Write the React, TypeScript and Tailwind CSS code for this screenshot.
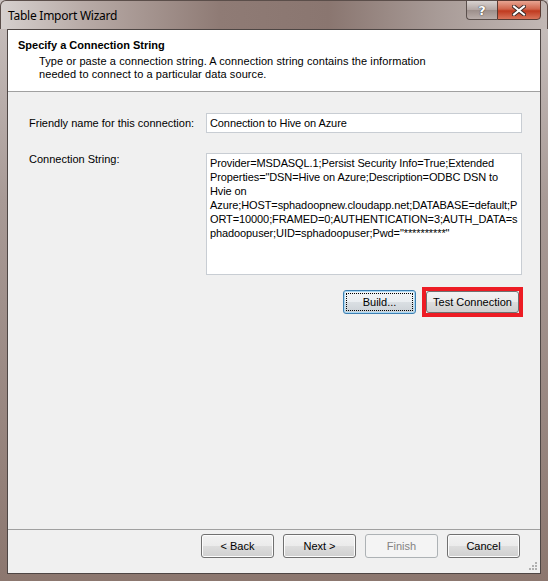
import React from "react";

const btn =
  "h-[24px] w-[73px] rounded-[3px] border border-[#707070] bg-[linear-gradient(to_bottom,#f2f2f2_0%,#ebebeb_50%,#dddddd_51%,#cfcfcf_100%)] text-[11px] text-black flex items-center justify-center shadow-[inset_0_0_0_1px_#fcfcfc]";

export default function App() {
  return (
    <div
      className="w-[548px] h-[581px] flex flex-col bg-[linear-gradient(to_bottom,#c9c1bf_0px,#a89a96_200px,#8c776f_581px)] relative overflow-hidden"
      style={{ fontFamily: '"Liberation Sans", Arial, sans-serif' }}
    >
      {/* title bar */}
      <div className="h-[29px] flex items-start relative bg-[linear-gradient(to_right,#d6d0ce_0%,#b8aba7_15%,#8f7b75_40%,#8a7670_60%,#a89b97_80%,#c2b8b5_100%)] rounded-t-[6px] border border-[#5b4e4a] border-b-0">
        <div
          className="pl-[7px] pt-[6px] text-[12px] text-black tracking-[-0.25px]"
          style={{ fontFamily: '"Noto Sans", "Open Sans", sans-serif' }}
        >
          Table Import Wizard
        </div>
        <div className="ml-auto mr-[6px] flex h-[20px] mt-[-1px]">
          <div className="w-[31px] h-[20px] rounded-bl-[4px] border border-[#5a4f4c] border-r-0 bg-[linear-gradient(to_bottom,#d8d2d0_0%,#b2a6a3_50%,#9c8e8a_51%,#b9adaa_100%)] flex items-center justify-center">
            <span className="text-[13px] font-bold text-white leading-none [text-shadow:0_0_1px_#333,0_0_1px_#333]" style={{ fontFamily: '"DejaVu Sans", sans-serif' }}>?</span>
          </div>
          <div className="w-[44px] h-[20px] rounded-br-[4px] border border-[#5a3a32] bg-[linear-gradient(to_bottom,#e8a592_0%,#d0654b_45%,#c03a1f_55%,#d9745a_100%)] flex items-center justify-center">
            <svg width="14" height="11" viewBox="0 0 14 11">
              <path d="M2 1.5 L12 9.5 M12 1.5 L2 9.5" stroke="#3a2a28" strokeWidth="4" strokeLinecap="square" />
              <path d="M2 1.5 L12 9.5 M12 1.5 L2 9.5" stroke="#ffffff" strokeWidth="2" strokeLinecap="square" />
            </svg>
          </div>
        </div>
      </div>

      {/* client area */}
      <div className="flex-1 mx-[7px] mb-[7px] border border-[#4e4644] bg-[#f0f0f0] flex flex-col relative">
        {/* header */}
        <div className="h-[62px] bg-white border-b border-[#a0a0a0] pl-[10px] pt-[9px]">
          <div className="text-[11px] font-bold text-black leading-[13px]">
            Specify a Connection String
          </div>
          <div className="pl-[21px] pt-[3px] text-[11px] text-black leading-[13px] tracking-[0.08px]">
            <div>Type or paste a connection string. A connection string contains the information</div>
            <div>needed to connect to a particular data source.</div>
          </div>
        </div>

        {/* body */}
        <div className="flex-1 pl-[21px] pr-[18px] pt-[21px] text-[11px] text-black">
          <div className="flex items-center h-[20px]">
            <div className="w-[177px]">Friendly name for this connection:</div>
            <div className="flex-1 h-[20px] bg-white border border-[#c8cdd3] flex items-center pl-[3px] tracking-[-0.1px]">
              Connection to Hive on Azure
            </div>
          </div>
          <div className="flex mt-[20px]">
            <div className="w-[177px] leading-[13px] pt-[0px]">Connection String:</div>
            <div className="flex-1 h-[122px] bg-white border border-[#c8cdd3] pl-[3px] pt-[2px] leading-[14px] whitespace-pre tracking-[-0.1px]">
              <div>Provider=MSDASQL.1;Persist Security Info=True;Extended</div>
              <div>Properties="DSN=Hive on Azure;Description=ODBC DSN to</div>
              <div>Hvie on</div>
              <div>Azure;HOST=sphadoopnew.cloudapp.net;DATABASE=default;P</div>
              <div>ORT=10000;FRAMED=0;AUTHENTICATION=3;AUTH_DATA=s</div>
              <div>phadoopuser;UID=sphadoopuser;Pwd="**********"</div>
            </div>
          </div>
          <div className="flex justify-end items-center mt-[12px]">
            <div className="h-[24px] w-[73px] rounded-[3px] border border-[#3c7fb1] bg-[linear-gradient(to_bottom,#f2f4f6_0%,#eaeef1_50%,#dadfe3_51%,#cbd1d6_100%)] shadow-[inset_0_0_0_1px_#a9d8f5] p-[2px] mr-[6px]">
              <div className="w-full h-full border border-dotted border-black flex items-center justify-center">
                Build...
              </div>
            </div>
            <div className="border-[4px] border-[#ed1c24] mr-[-1px]">
              <div className="h-[22px] w-[93px] rounded-[3px] border border-[#707070] bg-[linear-gradient(to_bottom,#f2f2f2_0%,#ebebeb_50%,#dddddd_51%,#cfcfcf_100%)] flex items-center justify-center">
                Test Connection
              </div>
            </div>
          </div>
        </div>

        {/* footer */}
        <div className="h-[44px] border-t border-[#a0a0a0] flex items-start justify-end pr-[20px] pt-[4px] gap-[9px]">
          <div className={btn}>&lt; Back</div>
          <div className={btn}>Next &gt;</div>
          <div className="h-[24px] w-[73px] rounded-[3px] border border-[#adb2b5] bg-[#f4f4f4] text-[11px] text-[#838383] flex items-center justify-center">
            Finish
          </div>
          <div className={btn}>Cancel</div>
        </div>
        {/* grip */}
        <svg className="absolute right-[2px] bottom-[2px]" width="10" height="10" viewBox="0 0 10 10">
          <g fill="#b0b0b0">
            <rect x="7" y="1" width="2" height="2" />
            <rect x="4" y="4" width="2" height="2" />
            <rect x="7" y="4" width="2" height="2" />
            <rect x="1" y="7" width="2" height="2" />
            <rect x="4" y="7" width="2" height="2" />
            <rect x="7" y="7" width="2" height="2" />
          </g>
        </svg>
      </div>
    </div>
  );
}
